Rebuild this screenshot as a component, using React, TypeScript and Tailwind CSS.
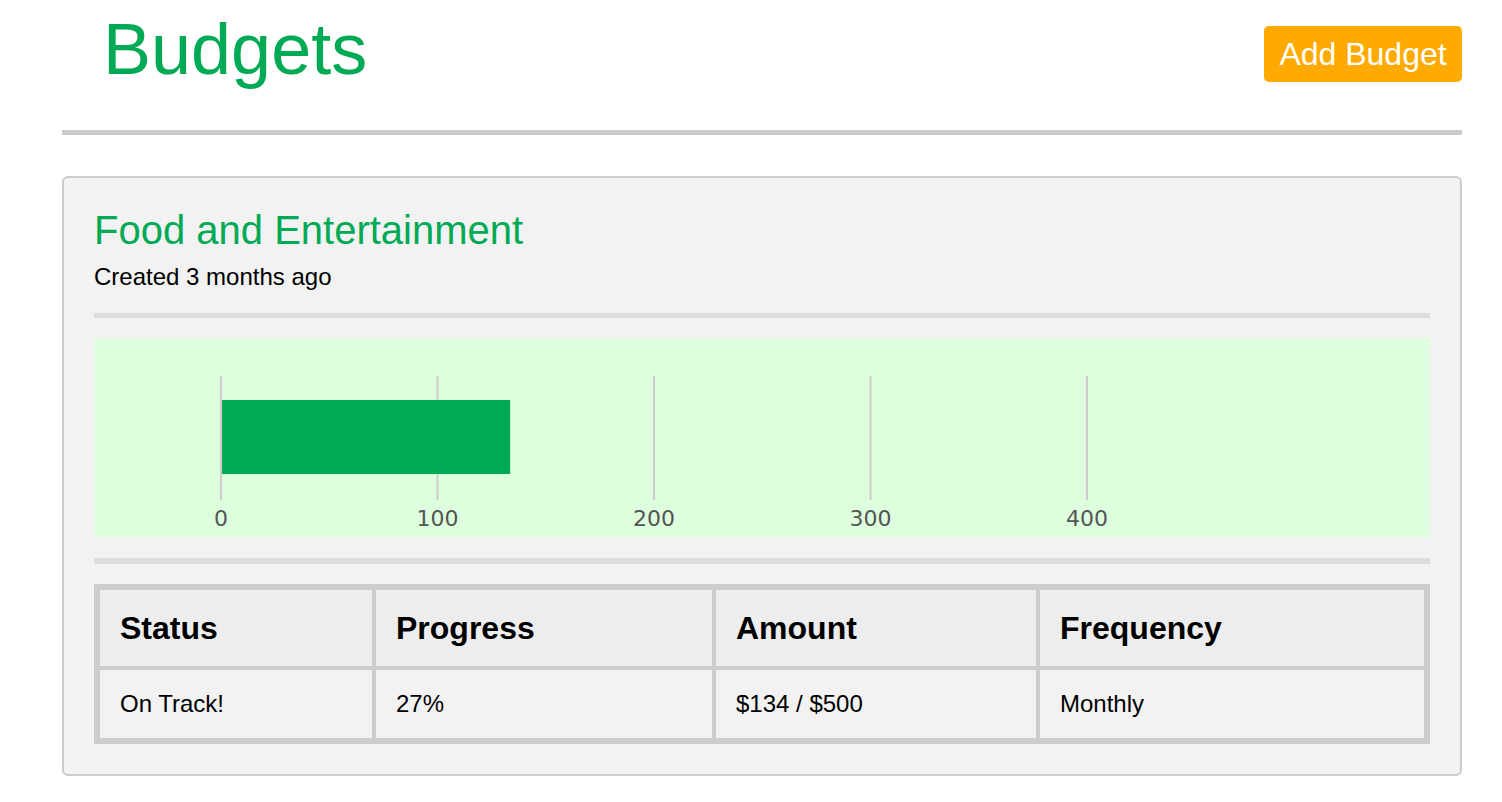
import React from 'react';

const ticks = [0, 100, 200, 300, 400];

const BudgetChart: React.FC<{ spent: number }> = ({ spent }) => {
   const x0 = 127;
   const step = 216.5;
   const barWidth = (spent / 100) * 215;
   return (
      <div className="mt-[20px] h-[199px] bg-[#ddffdd]">
         <svg width="100%" height="199" viewBox="0 0 1336 199">
            {ticks.map((t, i) => (
               <line key={t} x1={x0 + i * step} x2={x0 + i * step} y1={38} y2={162} stroke="#cccccc" strokeWidth={2} />
            ))}
            <rect x={x0 + 1} y={62} width={barWidth} height={74} fill="#00aa55" />
            {ticks.map((t, i) => (
               <text
                  key={t}
                  x={x0 + i * step}
                  y={188}
                  textAnchor="middle"
                  fill="#555555"
                  fontSize="22"
                  fontFamily="'DejaVu Sans', sans-serif"
               >
                  {t}
               </text>
            ))}
         </svg>
      </div>
   );
};

const columns = ['Status', 'Progress', 'Amount', 'Frequency'];
const values = ['On Track!', '27%', '$134 / $500', 'Monthly'];

const App: React.FC = () => {
   return (
      <div className="min-h-screen bg-white font-['Liberation_Sans',Arial,sans-serif] text-black">
         <div className="mx-[62px] w-[1400px]">
            <div className="flex h-[130px] items-start justify-between">
               <h1 className="ml-[41px] mt-[13px] text-[72px] leading-none text-[#00aa55]">Budgets</h1>
               <button className="mt-[26px] flex h-[56px] w-[198px] items-center justify-center rounded-[5px] bg-[#ffaa00] text-[32px] leading-none text-white">
                  Add Budget
               </button>
            </div>
            <div className="h-[5px] bg-[#cccccc]" />

            <div className="mt-[41px] rounded-[6px] border-2 border-[#cccccc] bg-[#f2f2f2] px-[30px] pb-[30px] pt-[32px]">
               <h2 className="text-[40px] leading-none text-[#00aa55]">Food and Entertainment</h2>
               <p className="mt-[15px] text-[24px] leading-none">Created 3 months ago</p>
               <div className="mt-[24px] h-[5px] bg-[#dcdcdc]" />

               <BudgetChart spent={134} />

               <div className="mt-[21px] h-[6px] bg-[#dcdcdc]" />

               <div className="mt-[20px] grid grid-cols-[272px_336px_320px_384px] grid-rows-[76px_68px] gap-[4px] bg-[#cccccc] p-[6px]">
                  {columns.map((c) => (
                     <div key={c} className="flex items-center bg-[#ededed] pl-[20px] text-[32px] font-bold leading-none">
                        {c}
                     </div>
                  ))}
                  {values.map((v) => (
                     <div key={v} className="flex items-center bg-[#f2f2f2] pl-[20px] text-[24px] leading-none">
                        {v}
                     </div>
                  ))}
               </div>
            </div>
         </div>
      </div>
   );
};

export default App;
